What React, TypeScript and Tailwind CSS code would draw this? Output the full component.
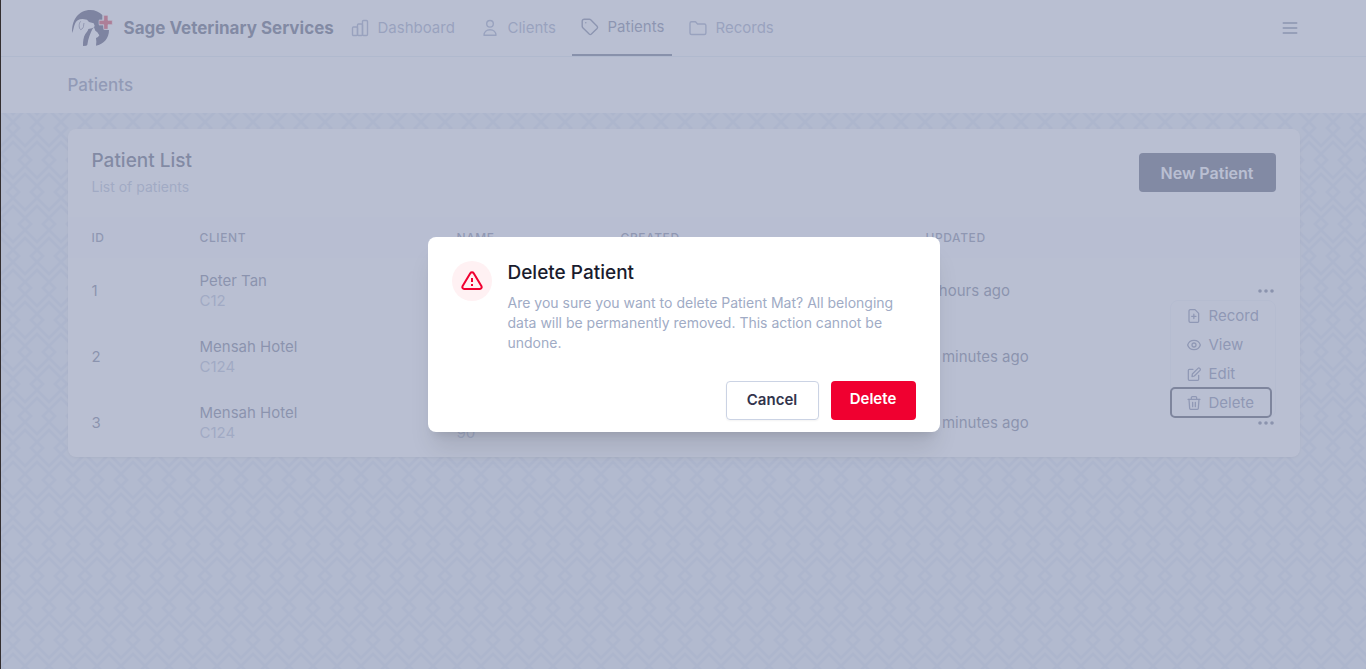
import React from "react";

type IconProps = { className?: string };

function Logo() {
  return (
    <svg viewBox="30 24 132 120" className="h-10 w-11 shrink-0" aria-hidden="true">
      <path
        fill="#14143c"
        d="M37 99C33 62 56 30 91 30c15 0 27 6 36 15v14h-10v17h12l4 14h14c0 25-16 43-39 47l1-12-1-11 6-3 4-5-6-9-6-5-4-10-5 6C92 99 84 116 82 134l-3 3-10 1c0-14 1-26 7-36 5-7 8-9 9-15l11-2 6-3 2-5-3-7-14-4-6-7-13-2c-12 0-20 6-23 14-4 9-5 19-8 28Z"
      />
      <path fill="none" stroke="#14143c" strokeWidth="2" d="M62 64c-6 6-6 21 0 25 6-2 9-7 9-14l1-6" />
      <path
        fill="#d0021b"
        stroke="#ffffff"
        strokeWidth="2"
        d="M131 46h13v15h13v13h-13v14h-13V74h-14V61h14Z"
      />
    </svg>
  );
}

function StrokeIcon({ className, children, box, weight }: IconProps & { children: React.ReactNode; box: string; weight: number }) {
  return (
    <svg
      viewBox={box}
      className={className}
      fill="none"
      stroke="currentColor"
      strokeWidth={weight}
      strokeLinecap="round"
      strokeLinejoin="round"
      aria-hidden="true"
    >
      {children}
    </svg>
  );
}

function NavIcon({ children }: { children: React.ReactNode }) {
  return (
    <StrokeIcon box="0 0 20 20" weight={1.4} className="size-5 shrink-0">
      {children}
    </StrokeIcon>
  );
}

function MenuIcon({ children }: { children: React.ReactNode }) {
  return (
    <StrokeIcon box="0 0 42 42" weight={3.8} className="size-3.5 shrink-0">
      {children}
    </StrokeIcon>
  );
}

const navItems = [
  {
    label: "Dashboard",
    width: "w-[122px]",
    icon: (
      <>
        <rect x="2.5" y="9" width="5" height="8.5" rx="1" />
        <rect x="7.5" y="6" width="5" height="11.5" rx="1" />
        <rect x="12.5" y="2.5" width="5" height="15" rx="1" />
      </>
    ),
  },
  {
    label: "Clients",
    width: "w-[92px]",
    icon: (
      <>
        <circle cx="10" cy="5.8" r="3.3" />
        <path d="M4 17.3c0-3.4 2.6-5.6 6-5.6s6 2.2 6 5.6Z" />
      </>
    ),
  },
  {
    label: "Patients",
    width: "w-[100px]",
    active: true,
    icon: (
      <>
        <path d="M2.2 4.2a2 2 0 0 1 2-2h5.2a2 2 0 0 1 1.3.6l6.4 6.4a1.6 1.6 0 0 1 0 2.2l-5.7 5.7a1.6 1.6 0 0 1-2.2 0L2.8 10.7a2 2 0 0 1-.6-1.3Z" />
        <path d="M5.8 5.8h.01" />
      </>
    ),
  },
  {
    label: "Records",
    width: "w-[101px]",
    icon: (
      <path d="M2 5.2A1.5 1.5 0 0 1 3.5 3.7h4l2 2.3h6.9a1.5 1.5 0 0 1 1.5 1.5V15a1.5 1.5 0 0 1-1.5 1.5H3.5A1.5 1.5 0 0 1 2 15Z" />
    ),
  },
];

const menuItems = [
  {
    label: "Record",
    icon: (
      <>
        <path d="M10 2h14l11 11v24a3 3 0 0 1-3 3H10a4 4 0 0 1-4-4V6a4 4 0 0 1 4-4Z" />
        <path d="M20.5 15.5v13M14 22h13" />
      </>
    ),
  },
  {
    label: "View",
    icon: (
      <>
        <path d="M2 21C5 11 12 7 21 7s16 4 19 14c-3 10-10 14-19 14S5 31 2 21Z" />
        <circle cx="21" cy="21" r="6" />
      </>
    ),
  },
  {
    label: "Edit",
    icon: (
      <>
        <path d="M18 7H7a3 3 0 0 0-3 3v27a3 3 0 0 0 3 3h25a3 3 0 0 0 3-3V25" />
        <path d="m15 29 1-8L33 4a3.5 3.5 0 0 1 5 0l1 1a3.5 3.5 0 0 1 0 5L22 27Z" />
      </>
    ),
  },
  {
    label: "Delete",
    focused: true,
    icon: (
      <>
        <path d="M3 10h36M13 10V5a3 3 0 0 1 3-3h10a3 3 0 0 1 3 3v5" />
        <path d="m6 10 2 27a3 3 0 0 0 3 3h20a3 3 0 0 0 3-3l2-27" />
        <path d="M17 19v13M25 19v13" />
      </>
    ),
  },
];

const patients = [
  { id: 1, client: "Peter Tan", code: "C12", name: "Rex", ref: "P12", created: "2 hours ago", updated: "2 hours ago" },
  { id: 2, client: "Mensah Hotel", code: "C124", name: "Mat", ref: "89", created: "30 minutes ago", updated: "11 minutes ago" },
  { id: 3, client: "Mensah Hotel", code: "C124", name: "Mat", ref: "90", created: "30 minutes ago", updated: "11 minutes ago" },
];

function Backdrop() {
  return (
    <svg className="absolute inset-0 h-full w-full" aria-hidden="true">
      <defs>
        <pattern id="diamonds" width="48" height="64" patternUnits="userSpaceOnUse">
          <path
            fill="#d0d9e9"
            fillRule="evenodd"
            d="M48 28v-4L36 12 24 24 12 12 0 24v4l4 4-4 4v4l12 12 12-12 12 12 12-12v-4l-4-4 4-4zM8 32l-6-6 10-10 10 10-6 6 6 6-10 10L2 38l6-6zm12 0l4-4 4 4-4 4-4-4zm12 0l-6-6 10-10 10 10-6 6 6 6-10 10-10-10 6-6zM0 16L10 6 4 0h4l4 4 4-4h4l-6 6 10 10L34 6l-6-6h4l4 4 4-4h4l-6 6 10 10v4L36 8 24 20 12 8 0 20v-4zm0 32l10 10-6 6h4l4-4 4 4h4l-6-6 10-10 10 10-6 6h4l4-4 4 4h4l-6-6 10-10v-4L36 56 24 44 12 56 0 44v4z"
          />
        </pattern>
      </defs>
      <rect width="100%" height="100%" fill="url(#diamonds)" />
    </svg>
  );
}

function Dots() {
  return (
    <svg viewBox="0 0 20 20" className="size-5" fill="currentColor" aria-hidden="true">
      <circle cx="4" cy="10" r="1.8" />
      <circle cx="10" cy="10" r="1.8" />
      <circle cx="16" cy="10" r="1.8" />
    </svg>
  );
}

function ActionMenu() {
  return (
    <div role="menu" className="absolute top-full right-6 z-10 -mt-6 w-[106px] rounded-lg border border-[#eef1f8] bg-white text-[#59638a]">
      {menuItems.map((item) => (
        <button
          key={item.label}
          type="button"
          role="menuitem"
          className={
            item.focused
              ? "flex h-[29px] w-[100px] items-center gap-2 rounded-sm pl-4 outline-2 -outline-offset-1 outline-[#14182f]"
              : "flex h-[29px] w-[100px] items-center gap-2 pl-4"
          }
        >
          <MenuIcon>{item.icon}</MenuIcon>
          {item.label}
        </button>
      ))}
    </div>
  );
}

function DeleteDialog() {
  return (
    <div className="absolute inset-0 z-20 flex items-center justify-center bg-[#a2aac3]/75 p-4">
      <div
        role="dialog"
        aria-modal="true"
        aria-labelledby="dialog-title"
        className="w-full max-w-lg rounded-lg bg-white px-6 pt-6 pb-3 shadow-xl"
      >
        <div className="flex gap-4">
          <div className="flex size-10 shrink-0 items-center justify-center rounded-full bg-[#fff1f3]">
            <StrokeIcon box="0 0 24 24" weight={2} className="size-6 text-[#f00030]">
              <path d="M10.3 4.2 2.5 17.2a1.9 1.9 0 0 0 1.7 2.8h15.6a1.9 1.9 0 0 0 1.7-2.8L13.7 4.2a2 2 0 0 0-3.4 0Z" />
              <path strokeLinecap="butt" d="M12 9v4M12 15v2" />
            </StrokeIcon>
          </div>
          <div>
            <h3 id="dialog-title" className="text-[19px] leading-6 font-medium text-[#1a1c2e]">
              Delete Patient
            </h3>
            <p className="mt-2 text-sm leading-5 text-[#a0abc5]">
              Are you sure you want to delete Patient Mat? All belonging data will be permanently removed. This action
              cannot be undone.
            </p>
          </div>
        </div>
        <div className="mt-7 flex justify-end gap-3">
          <button
            type="button"
            className="h-[39px] w-[93px] rounded border border-[#cbd3e4] pb-0.5 text-[15px] font-semibold text-[#32344c] shadow-xs"
          >
            Cancel
          </button>
          <button
            type="button"
            className="h-[39px] w-[85px] rounded bg-[#f00030] pb-1 text-[15px] font-semibold text-white"
          >
            Delete
          </button>
        </div>
      </div>
    </div>
  );
}

export default function App() {
  return (
    <div className="relative min-h-screen border-l border-[#332e30] bg-[#e4ebf1] font-['Inter','Liberation_Sans',sans-serif] text-[15px] leading-5 text-[#4a5270]">
      <div className="absolute inset-0">
        <Backdrop />
      </div>

      <div className="relative">
        <header className="border-b border-[#dbe6f0] bg-white">
          <div className="mx-auto flex h-14 max-w-7xl items-center px-6">
            <a href="#" className="flex w-[274px] items-center gap-2.5 pl-0.5 text-[17px] font-bold text-[#262c48]">
              <Logo />
              <span className="whitespace-nowrap">Sage Veterinary Services</span>
            </a>
            <nav className="flex h-full gap-2">
              {navItems.map((item) => (
                <a
                  key={item.label}
                  href="#"
                  className={`${item.width} ${
                    item.active ? "border-b-2 border-[#3f4864] text-[#4f5a7c]" : "text-[#7f8cb0]"
                  } flex h-full items-center gap-2 px-2`}
                >
                  <NavIcon>{item.icon}</NavIcon>
                  {item.label}
                </a>
              ))}
            </nav>
            <button type="button" aria-label="Open menu" className="ml-auto text-[#4a5578]">
              <StrokeIcon box="0 0 24 24" weight={2} className="size-5">
                <path d="M4 6h16M4 12h16M4 18h16" />
              </StrokeIcon>
            </button>
          </div>
        </header>

        <div className="bg-white">
          <div className="mx-auto flex h-14 max-w-7xl items-center px-6">
            <h1 className="text-[17px] font-medium text-[#636e90]">Patients</h1>
          </div>
        </div>

        <main className="mx-auto max-w-7xl px-6 pt-4">
          <section className="rounded-lg bg-white pb-px shadow">
            <div className="flex items-start justify-between px-6 py-5">
              <div>
                <h2 className="text-[19px] leading-6 font-medium text-[#262c48]">Patient List</h2>
                <p className="mt-1 text-sm leading-5 text-[#a0abc5]">List of patients</p>
              </div>
              <button
                type="button"
                className="mt-1 h-[39px] w-[137px] rounded bg-[#262c48] text-base font-semibold text-white"
              >
                New Patient
              </button>
            </div>
            <table className="w-full table-fixed text-left">
              <thead>
                <tr className="h-[41px] bg-[#fafbfd] text-xs tracking-wider text-[#59627f] uppercase">
                  <th className="w-[108px] px-6 font-medium">ID</th>
                  <th className="w-[257px] px-6 font-medium">Client</th>
                  <th className="w-[164px] px-6 font-medium">Name</th>
                  <th className="w-[305px] px-6 font-medium">Created</th>
                  <th className="px-6 font-medium">Updated</th>
                  <th className="w-[152px] px-6" aria-label="Actions" />
                </tr>
              </thead>
              <tbody>
                {patients.map((patient) => (
                  <tr key={patient.id} className="h-[66px]">
                    <td className="px-6">{patient.id}</td>
                    <td className="px-6">
                      <p>{patient.client}</p>
                      <p className="text-[#a0abc5]">{patient.code}</p>
                    </td>
                    <td className="px-6">
                      <p>{patient.name}</p>
                      <p className="text-[#a0abc5]">{patient.ref}</p>
                    </td>
                    <td className="px-6">{patient.created}</td>
                    <td className="px-6">{patient.updated}</td>
                    <td className="relative px-6 text-right">
                      <button type="button" aria-label={`Actions for patient ${patient.id}`} className="align-middle">
                        <Dots />
                      </button>
                      {patient.id === 1 && <ActionMenu />}
                    </td>
                  </tr>
                ))}
              </tbody>
            </table>
          </section>
        </main>
      </div>

      <DeleteDialog />
    </div>
  );
}
